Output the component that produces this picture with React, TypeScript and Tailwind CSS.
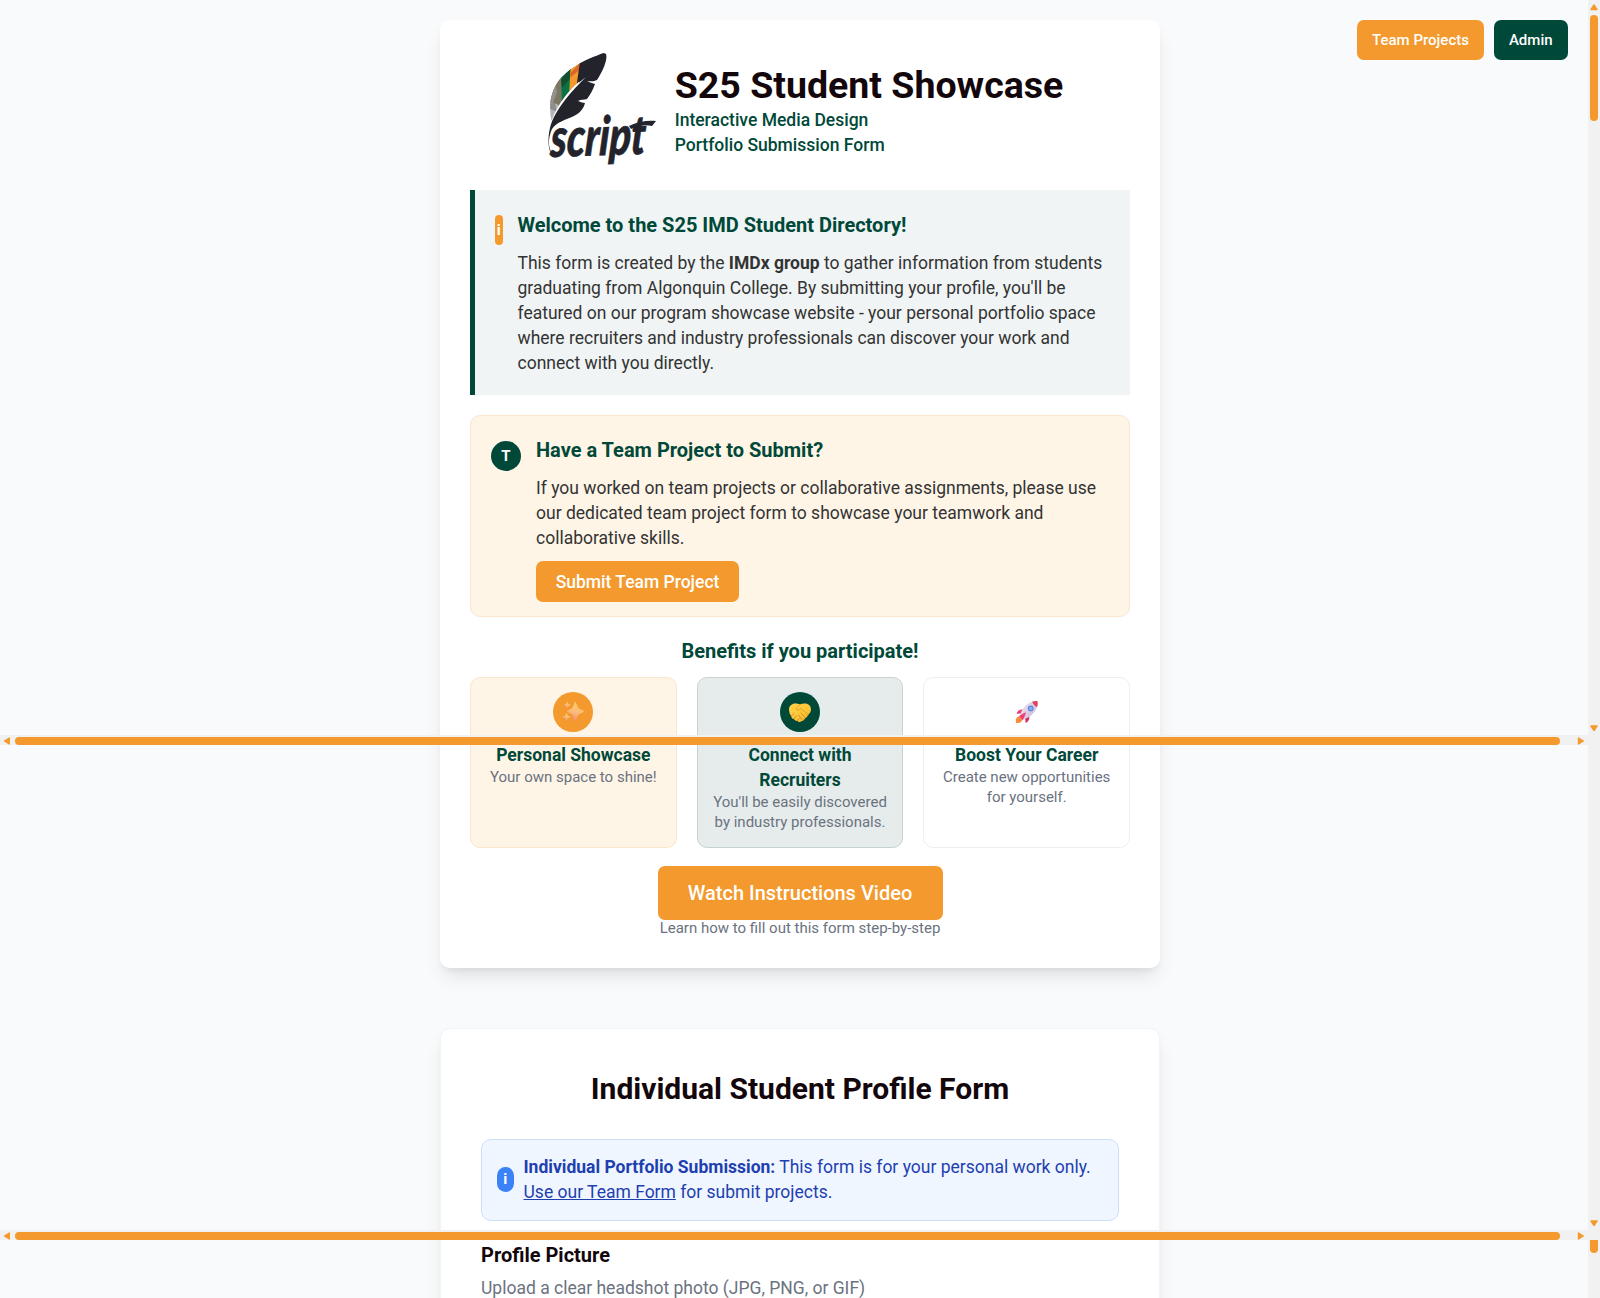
import React from 'react';

function ScriptLogo() {
  return (
    <svg className="h-[120px] w-[120px] shrink-0 overflow-visible" viewBox="7 10 120 120" role="img" aria-label="script">
      <defs>
        <clipPath id="vane">
          <path d="M21.5 81C18 66 21 50 30 39C38 30 50 22 66 16L60 33L51 40C41 48 28 62 21.5 81Z" />
        </clipPath>
      </defs>
      <g clipPath="url(#vane)">
        <rect x="14" y="10" width="60" height="76" fill="#b5b5b5" />
        <path d="M14 60L24 58L27 72L14 66Z" fill="#8f8e8c" />
        <path d="M14 60L25 40L33 34L33 70L27 64Z" fill="#7b7762" />
        <path d="M18 56L25 43L27 52L22 66Z" fill="#95928c" />
        <path d="M31 30L41 24L40 58L32 66Z" fill="#087345" />
        <path d="M31 40L41 26L40.500 38L32 48Z" fill="#14502f" />
        <path d="M41 20L53 16L48 50L39 56Z" fill="#f5982b" />
        <path d="M40 34L52 20L50.500 29L41 37Z" fill="#d9662a" />
        <path d="M51 14L72 10L66 40L46 50Z" fill="#22232b" />
      </g>
      <path
        d="M76 14C78 19 73 31 67 40C63 42 60 41 57 41C61 43 63 43 65 44C63 50 60 55 57 59C54 60 51 59 48 61C51 62 53 63 55 63C54 68 50 73 44 76C35 80 27 82 22 89C19 96 18 103 20 109L22 115C18 110 17.500 98 20 88C22 79 28 69 35 60C42 51 49 44 56 37L49 42.500C49.500 34 50.500 28 51 25C59 19 69 14 74 13Z"
        fill="#22232b"
      />
      <g transform="rotate(-2 20 115) translate(20 117) skewX(-5) scale(1 1.42)">
        <text
          x="0"
          y="0"
          fill="#22232b"
          stroke="#22232b"
          strokeWidth="0.5"
          fontFamily="Lato"
          fontWeight="900"
          fontStyle="italic"
          fontSize="38"
          textLength="95"
          lengthAdjust="spacingAndGlyphs"
        >
          script
        </text>
      </g>
      <path d="M99 86C107 82 117 80 126 81L122 86C114 84 107 86 101 89Z" fill="#22232b" />
    </svg>
  );
}

function SparklesIcon() {
  return (
    <svg className="h-[22px] w-[22px]" viewBox="0 0 22 22">
      <defs>
        <linearGradient id="spark" x1="0.6" y1="0" x2="0.35" y2="1">
          <stop offset="0.1" stopColor="#fbc76a" />
          <stop offset="0.5" stopColor="#fbbd7a" />
          <stop offset="1" stopColor="#f58a78" />
        </linearGradient>
      </defs>
      <g fill="url(#spark)">
        <path d="M12.700 1.500Q13.200 0 13.900 1.500L16 6.200Q16.400 7.300 17.500 7.700L21.500 9.700Q22.500 10.300 21.500 10.900L17.500 13Q16.400 13.400 16 14.500L13.900 19.500Q13.200 21 12.600 19.500L10.500 14.500Q10.100 13.400 9 13L5.500 11Q4.700 10.400 5.500 9.700L9 7.700Q10.100 7.300 10.500 6.200Z" />
        <path d="M4.900 1Q5.200.4 5.600 1L6.200 2.900 8.300 3.700Q8.900 4.100 8.300 4.500L6.200 5.200 5.600 7Q5.200 7.700 4.900 7L4.200 5.200 2.400 4.500Q1.800 4.100 2.400 3.700L4.200 2.900Z" />
        <path d="M4.200 12.200Q4.600 11.500 5 12.200L5.800 14.700 8.100 15.600Q8.700 16.100 8.100 16.500L5.800 17.300 5 19.700Q4.600 20.400 4.200 19.700L3.300 17.300 1 16.500Q.4 16.100 1 15.600L3.300 14.700Z" />
      </g>
    </svg>
  );
}

function HandshakeIcon() {
  return (
    <svg className="h-[22px] w-6" viewBox="0 0 24 22">
      <defs>
        <linearGradient id="hands" x1="0" y1="0" x2="1" y2="1">
          <stop offset="0" stopColor="#ffd34a" />
          <stop offset="0.6" stopColor="#fcc538" />
          <stop offset="1" stopColor="#efa52c" />
        </linearGradient>
      </defs>
      <path
        d="M1 8C1 5 4 2.500 7 2.500C9 2.500 10 3.200 12 3.200C14 3.200 15 2.500 17 2.500C20.500 2.500 23 5 23 8.500C23 11 21.500 13 20 14C19.500 16 18 17 17 17.500C16 19.500 14.500 20 13.500 20.300C12 21.500 10 21 9.500 20C7.500 20.200 6.500 19 6 18C4 18 3.200 16.500 3.300 15C2 14 1 11 1 8Z"
        fill="url(#hands)"
      />
      <path d="M13 3.300C10 5 8 6.500 8.200 8C8.500 9.500 11 9 13 7.500C14 8 17 11 20 13.600" fill="none" stroke="#e89b23" strokeWidth="0.900" strokeLinecap="round" />
      <path d="M13 12L17 16.500M10.500 14L14 18.500M3.500 15L6 12.500M6 17.800L8.500 14.800M9.300 19.800L11 17.500" fill="none" stroke="#d58520" strokeWidth="0.900" strokeLinecap="round" />
    </svg>
  );
}

function RocketIcon() {
  return (
    <svg className="h-6 w-6" viewBox="0 0 24 24">
      <defs>
        <linearGradient id="hull" x1="0" y1="0" x2="1" y2="1">
          <stop offset="0" stopColor="#f2eafa" />
          <stop offset="1" stopColor="#c3b3d3" />
        </linearGradient>
      </defs>
      <path d="M1.500 18C2.500 16.500 5 16 6.500 17.500C8 19.500 7 21.500 5.500 22.300C4 23.200 2 23 1 23C.8 21.500.8 19.500 1.500 18Z" fill="#fb8b3c" />
      <path d="M8.500 10C6 9 3.500 10 2 12.500C1.500 13.500 2 14 3 13.700L7 13.500Z" fill="#ef3f73" />
      <path d="M14 15.500C15 18 14 20.500 12 22.300C11 23 10.400 22.500 10.500 21.500L10 17.500Z" fill="#d92b62" />
      <path d="M5 17C5.500 11 9 6 14 3C17.500 1.200 20.500.8 22.500 1.200C23 4 22.500 7 20.500 10.200C17.500 15 13 18.500 7.500 19.300Z" fill="url(#hull)" />
      <path d="M17 1.800C19.500 1 21.500 1 22.500 1.200C22.900 3.500 22.600 5.500 22 7.200Q18.500 5.500 17 1.800Z" fill="#e63e5d" />
      <path d="M4 16L10 12.500Q11 12.500 10.700 13.700L7.800 20.200Z" fill="#ef3f73" />
      <circle cx="15.700" cy="8.400" r="2.800" fill="#5b7bd0" />
      <circle cx="15.700" cy="8.400" r="1.900" fill="#78b5ee" />
    </svg>
  );
}

function HorizontalScrollbar({ className }: { className: string }) {
  return (
    <div className={`absolute left-0 flex h-[10px] w-[1588px] items-end bg-[#f1f1f1] ${className}`}>
      <svg className="h-2 w-[15px]" viewBox="0 0 15 8">
        <path d="M9.300 1V7L4.500 4Z" fill="#f3992d" stroke="#f3992d" strokeWidth="1.400" strokeLinejoin="round" />
      </svg>
      <div className="h-2 w-[1545px] rounded-full bg-[#f3992d]" />
      <svg className="h-2 w-[28px]" viewBox="0 0 28 8">
        <path d="M18.500 1V7L23.300 4Z" fill="#f3992d" stroke="#f3992d" strokeWidth="1.400" strokeLinejoin="round" />
      </svg>
    </div>
  );
}

function Arrow({ className, up = false }: { className: string; up?: boolean }) {
  return (
    <svg className={`absolute left-[2px] h-[7px] w-2 ${className}`} viewBox="0 0 8 7">
      <path d={up ? 'M1 5.500H7L4 1Z' : 'M1 1H7L4 5.500Z'} fill="#f3992d" stroke="#f3992d" strokeWidth="1.400" strokeLinejoin="round" />
    </svg>
  );
}

type BenefitProps = { icon: React.ReactNode; title: string; text: string; card: string; circle: string };

function Benefit({ icon, title, text, card, circle }: BenefitProps) {
  return (
    <div className={`flex h-[171.5px] flex-1 flex-col items-center rounded-[10px] border px-[15px] pt-[14.5px] text-center ${card}`}>
      <div className={`mb-[10.5px] flex h-10 w-10 shrink-0 items-center justify-center rounded-full ${circle}`}>{icon}</div>
      <h3 className="mb-[-0.6px] text-[17.5px] leading-[25px] font-bold text-[#004838]">{title}</h3>
      <p className="text-[15px] leading-5 text-[#6b7280]">{text}</p>
    </div>
  );
}

export default function App() {
  return (
    <div className="relative h-[1298px] w-[1600px] overflow-hidden bg-[#f9fafc] font-['Roboto',sans-serif] text-[17.5px] leading-[25px] text-[#333]">
      <main className="flex flex-col items-center pt-5">
        <section className="h-[948px] w-[720px] rounded-[10px] bg-white p-[30px] shadow-[0_12px_19px_-4px_rgba(0,0,0,0.1),0_5px_8px_-5px_rgba(0,0,0,0.1)]">
          <header className="mb-5 flex items-center justify-center gap-[18px]">
            <ScriptLogo />
            <div className="font-medium text-[#004838]">
              <h1 className="text-[37.5px] leading-[45px] font-bold text-[#13070c]">S25 Student Showcase</h1>
              <p>Interactive Media Design</p>
              <p>Portfolio Submission Form</p>
            </div>
          </header>

          <div className="mb-5 flex h-[205px] gap-[15px] border-l-[5px] border-[#004838] bg-[#f0f4f5] p-5">
            <span className="mt-[5px] flex h-[30px] w-[7.5px] shrink-0 items-center justify-center rounded-full bg-[#f3992d] text-[15px] font-bold text-white">i</span>
            <div>
              <h2 className="mb-[10.5px] text-[20px] leading-[30px] font-bold text-[#004838]">Welcome to the S25 IMD Student Directory!</h2>
              <p>
                This form is created by the <strong className="font-bold">IMDx group</strong> to gather information from students graduating from Algonquin College. By submitting your profile, you'll be featured on our program showcase website - your personal portfolio space where recruiters and industry professionals can discover your work and connect with you directly.
              </p>
            </div>
          </div>

          <div className="mb-[19px] flex h-[202px] gap-[15px] rounded-[10px] border border-[#fae6cc] bg-[#fef5e7] p-5">
            <span className="mt-[5px] flex h-[30px] w-[30px] shrink-0 items-center justify-center rounded-full bg-[#004838] text-[15px] font-bold text-white">T</span>
            <div>
              <h2 className="-mt-[0.6px] mb-[11px] text-[20px] leading-[30px] font-bold text-[#004838]">Have a Team Project to Submit?</h2>
              <p className="mb-[10px]">If you worked on team projects or collaborative assignments, please use our dedicated team project form to showcase your teamwork and collaborative skills.</p>
              <button className="h-[40.5px] w-[203px] rounded-[7px] bg-[#f3992d] pt-px font-medium text-white">Submit Team Project</button>
            </div>
          </div>

          <h2 className="mb-[10.5px] text-center text-[20px] leading-[30px] font-bold text-[#004838]">Benefits if you participate!</h2>
          <div className="flex gap-5">
            <Benefit icon={<SparklesIcon />} title="Personal Showcase" text="Your own space to shine!" card="border-[#fae6cc] bg-[#fef5e7]" circle="bg-[#f3992d]" />
            <Benefit icon={<HandshakeIcon />} title="Connect with Recruiters" text="You'll be easily discovered by industry professionals." card="border-[#c5d4d1] bg-[#e6eceb]" circle="bg-[#004838]" />
            <Benefit icon={<RocketIcon />} title="Boost Your Career" text="Create new opportunities for yourself." card="border-[#eeeff1] bg-white" circle="bg-white" />
          </div>
          <div className="mt-[18px] flex flex-col items-center">
            <button className="h-[54px] w-[285px] rounded-[7px] bg-[#f3992d] text-[20px] font-medium text-white">Watch Instructions Video</button>
            <p className="-mt-[2px] text-[15px] leading-5 text-[#6b7280]">Learn how to fill out this form step-by-step</p>
          </div>
        </section>

        <section className="mt-[60px] h-[400px] w-[720px] rounded-[10px] border border-[#f3f4f6] bg-white p-10 shadow-[0_12px_19px_-4px_rgba(0,0,0,0.1),0_5px_8px_-5px_rgba(0,0,0,0.1)]">
          <h2 className="mb-[31px] pt-px text-center text-[30px] leading-[38px] font-bold text-[#13070c]">Individual Student Profile Form</h2>
          <div className="flex h-[82px] items-center gap-[10px] rounded-[10px] border border-[#cbdff8] bg-[#eff6ff] px-[15px] text-[#1e40af]">
            <span className="-mt-px flex h-[25px] w-[16.5px] shrink-0 items-center justify-center rounded-full bg-[#3b82f6] text-[15px] font-bold text-white">i</span>
            <p>
              <strong className="font-bold">Individual Portfolio Submission:</strong> This form is for your personal work only. <a className="underline">Use our Team Form</a> for submit projects.
            </p>
          </div>
          <h3 className="mt-[19px] text-[20px] leading-[30px] font-bold text-[#13070c]">Profile Picture</h3>
          <p className="mt-[6px] text-[#6b7280]">Upload a clear headshot photo (JPG, PNG, or GIF)</p>
        </section>
      </main>

      <nav className="absolute top-5 right-[32.5px] flex gap-[10px] text-[15px] font-medium text-white">
        <button className="h-10 w-[127px] rounded-[7px] bg-[#f3992d]">Team Projects</button>
        <button className="h-10 w-[73.5px] rounded-[7px] bg-[#004838]">Admin</button>
      </nav>

      <div className="absolute top-0 right-0 h-full w-3 bg-[#f1f1f1]">
        <Arrow className="top-[4px]" up />
        <div className="absolute top-[15px] left-[2px] h-[106px] w-2 rounded-full bg-[#f3992d]" />
        <Arrow className="top-[725px]" />
        <Arrow className="top-[1220px]" />
        <div className="absolute top-[1240px] left-[2px] h-[13px] w-2 rounded-b-full bg-[#f3992d]" />
      </div>
      <HorizontalScrollbar className="top-[735px]" />
      <HorizontalScrollbar className="top-[1230px]" />
    </div>
  );
}
